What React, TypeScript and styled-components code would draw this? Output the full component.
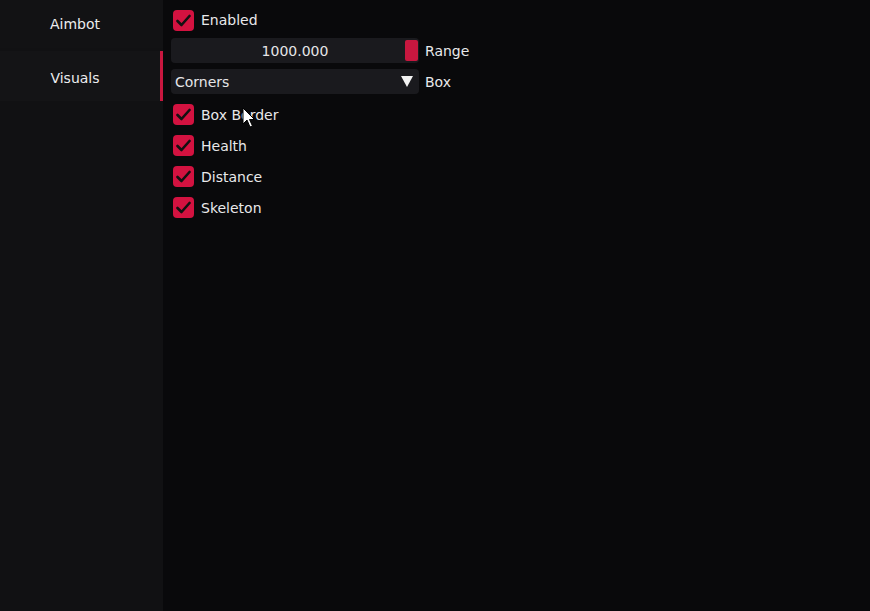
import React from 'react';
import styled, { createGlobalStyle } from 'styled-components';

const Global = createGlobalStyle`
  html, body {
    margin: 0;
    padding: 0;
    background: #09090b;
  }
  body {
    font-family: 'DejaVu Sans', 'Liberation Sans', sans-serif;
    color: #e6e6e8;
  }
`;

const Window = styled.div`
  position: relative;
  display: flex;
  width: 870px;
  height: 611px;
  overflow: hidden;
  background: #09090b;
`;

const Sidebar = styled.nav`
  width: 163px;
  flex-shrink: 0;
  display: flex;
  flex-direction: column;
  background: #111113;
`;

const Tab = styled.div<{ active?: boolean }>`
  height: ${({ active }) => (active ? 50 : 48)}px;
  margin-bottom: ${({ active }) => (active ? 0 : 3)}px;
  display: flex;
  align-items: center;
  justify-content: center;
  padding-right: 10px;
  padding-top: ${({ active }) => (active ? 4 : 0)}px;
  box-sizing: border-box;
  font-size: 14px;
  color: #ececee;
  background: ${({ active }) => (active ? '#141416' : '#121214')};
  border-right: 3px solid ${({ active }) => (active ? '#c8173f' : 'transparent')};
`;

const Content = styled.main`
  flex: 1;
  display: flex;
  flex-direction: column;
  padding: 5px 0 0 8px;
`;

const Row = styled.div<{ h?: number }>`
  display: flex;
  align-items: center;
  height: ${({ h }) => h ?? 31}px;
  gap: 7px;
`;

const Box = styled.span`
  width: 21px;
  height: 21px;
  margin-left: 2px;
  border-radius: 4px;
  background: #d31240;
  display: flex;
  align-items: center;
  justify-content: center;
`;

const Label = styled.span`
  font-size: 14px;
  color: #e8e8ea;
`;

const Field = styled.div`
  width: 248px;
  height: 25px;
  border-radius: 4px;
  background: #1a1a1e;
  display: flex;
  align-items: center;
  position: relative;
  font-size: 14px;
`;

const SliderValue = styled.span`
  flex: 1;
  text-align: center;
`;

const Grab = styled.span`
  position: absolute;
  right: 1px;
  top: 2px;
  width: 13px;
  height: 21px;
  border-radius: 2px;
  background: #c8173f;
`;

const ComboValue = styled.span`
  flex: 1;
  padding-left: 4px;
`;

const Arrow = styled.span`
  width: 0;
  height: 0;
  margin-right: 6px;
  border-left: 6px solid transparent;
  border-right: 6px solid transparent;
  border-top: 11px solid #f2f2f2;
`;

const FieldRow = styled.div<{ gapAfter?: number }>`
  display: flex;
  align-items: center;
  gap: 6px;
  height: 31px;
  margin-bottom: ${({ gapAfter }) => gapAfter ?? 0}px;
`;

const Cursor = styled.svg`
  position: absolute;
  left: 242px;
  top: 107px;
`;

const Check = ({ label, h }: { label: string; h?: number }) => (
  <Row h={h}>
    <Box>
      <svg width="15" height="13" viewBox="0 0 15 13">
        <path d="M1.5 7 L5.5 11 L13.5 2" fill="none" stroke="#111" strokeWidth="2.6" strokeLinecap="round" strokeLinejoin="round" />
      </svg>
    </Box>
    <Label>{label}</Label>
  </Row>
);

export default function App() {
  return (
    <Window>
      <Global />
      <Sidebar>
        <Tab>Aimbot</Tab>
        <Tab active>Visuals</Tab>
      </Sidebar>
      <Content>
        <Check label="Enabled" h={30} />
        <FieldRow>
          <Field>
            <SliderValue>1000.000</SliderValue>
            <Grab />
          </Field>
          <Label>Range</Label>
        </FieldRow>
        <FieldRow gapAfter={2}>
          <Field>
            <ComboValue>Corners</ComboValue>
            <Arrow />
          </Field>
          <Label>Box</Label>
        </FieldRow>
        <Check label="Box Border" />
        <Check label="Health" />
        <Check label="Distance" />
        <Check label="Skeleton" />
      </Content>
      <Cursor width="14" height="22" viewBox="0 0 14 22">
        <path d="M1 1 L1 17 L5 13 L8 20 L10.5 19 L7.5 12.5 L12.5 12.5 Z" fill="#fff" stroke="#000" strokeWidth="1" strokeLinejoin="round" />
      </Cursor>
    </Window>
  );
}
